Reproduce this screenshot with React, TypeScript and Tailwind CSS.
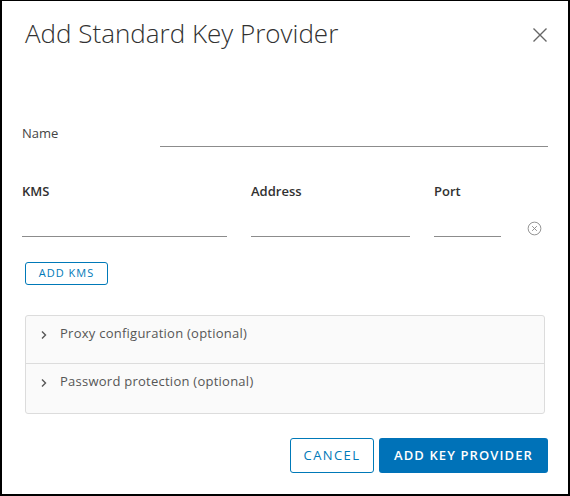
import React from "react";

const font = { fontFamily: "'Open Sans', 'Liberation Sans', sans-serif" };

function Chevron() {
  return (
    <svg width="8" height="10" viewBox="0 0 8 10" className="shrink-0">
      <path d="M2 1.5 L5.5 5 L2 8.5" fill="none" stroke="#565656" strokeWidth="1.4" />
    </svg>
  );
}

export default function App() {
  return (
    <div
      className="w-[570px] h-[496px] bg-white border-black border-t border-l-2 border-r-2 border-b-2 flex flex-col text-[#333]"
      style={font}
    >
      <div className="flex items-start justify-between pl-[23px] pr-[20px] pt-[15px]">
        <h1 className="text-[26px] font-light leading-[34px] text-[#313131]">Add Standard Key Provider</h1>
        <button className="mt-[11px] w-[16px] h-[16px] flex items-center justify-center">
          <svg width="16" height="16" viewBox="0 0 16 16">
            <path d="M1.5 1.5 L14.5 14.5 M14.5 1.5 L1.5 14.5" stroke="#666" strokeWidth="1.4" fill="none" />
          </svg>
        </button>
      </div>

      <div className="flex items-end pl-[20px] pr-[20px] mt-[73px]">
        <div className="w-[138px] text-[13px] text-[#454545] pb-[4px]">Name</div>
        <div className="flex-1 border-b border-[#8c8c8c] h-[24px]" />
      </div>

      <div className="flex pl-[20px] mt-[35px]">
        <div className="w-[205px] flex flex-col">
          <div className="text-[13px] font-semibold text-[#313131] leading-[18px]">KMS</div>
          <div className="mt-[22px] border-b border-[#8c8c8c] h-[15px]" />
        </div>
        <div className="w-[159px] ml-[24px] flex flex-col">
          <div className="text-[13px] font-semibold text-[#313131] leading-[18px]">Address</div>
          <div className="mt-[22px] border-b border-[#8c8c8c] h-[15px]" />
        </div>
        <div className="w-[67px] ml-[24px] flex flex-col">
          <div className="text-[13px] font-semibold text-[#313131] leading-[18px]">Port</div>
          <div className="mt-[22px] border-b border-[#8c8c8c] h-[15px]" />
        </div>
        <div className="ml-[26px] mt-[39px]">
          <svg width="15" height="15" viewBox="0 0 16 16">
            <circle cx="8" cy="8" r="6.8" fill="none" stroke="#8c8c8c" strokeWidth="1" />
            <path d="M5.5 5.5 L10.5 10.5 M10.5 5.5 L5.5 10.5" stroke="#8c8c8c" strokeWidth="1" />
          </svg>
        </div>
      </div>

      <div className="pl-[23px] mt-[25px]">
        <button className="h-[23px] w-[83px] border border-[#0079b8] rounded-[3px] text-[11px] text-[#0079b8] tracking-[1px] flex items-center justify-center">
          ADD KMS
        </button>
      </div>

      <div className="mx-[23px] mt-[30px] h-[99px] bg-[#fafafa] border border-[#dcdcdc] rounded-[3px] flex flex-col">
        <div className="h-[48px] border-b border-[#dcdcdc] flex items-start pt-[8px] pl-[14px] gap-[12px]">
          <div className="mt-[6px]"><Chevron /></div>
          <span className="text-[13px] text-[#565656] tracking-[0.25px]">Proxy configuration (optional)</span>
        </div>
        <div className="flex-1 flex items-start pt-[8px] pl-[14px] gap-[12px]">
          <div className="mt-[6px]"><Chevron /></div>
          <span className="text-[13px] text-[#565656] tracking-[0.25px]">Password protection (optional)</span>
        </div>
      </div>

      <div className="flex justify-end gap-[5px] pr-[20px] mt-[24px]">
        <button className="h-[35px] w-[84px] border border-[#0079b8] rounded-[3px] text-[13px] text-[#0079b8] tracking-[1.4px]">
          CANCEL
        </button>
        <button className="h-[35px] w-[169px] bg-[#0072b8] rounded-[3px] text-[13px] text-white tracking-[1.1px] font-semibold">
          ADD KEY PROVIDER
        </button>
      </div>
    </div>
  );
}
